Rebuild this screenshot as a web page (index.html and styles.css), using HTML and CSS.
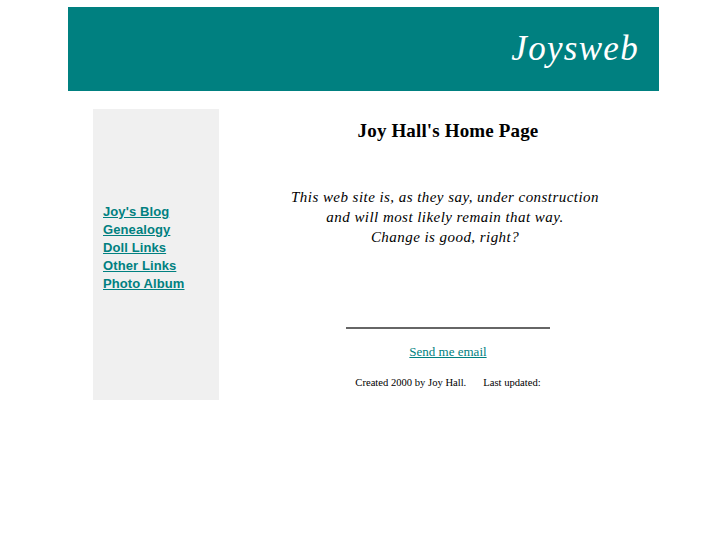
FILE: index.html
```html
<!DOCTYPE html>
<html>
<head>
<meta charset="utf-8">
<title>Joysweb</title>
<link rel="stylesheet" href="styles.css">
</head>
<body>
<div class="page">
  <header class="banner"><span class="brand">Joysweb</span></header>
  <div class="row">
    <nav class="sidebar">
      <a href="#">Joy's Blog</a>
      <a href="#">Genealogy</a>
      <a href="#">Doll Links</a>
      <a href="#">Other Links</a>
      <a href="#">Photo Album</a>
    </nav>
    <main class="content">
      <h1 class="title">Joy Hall's Home Page</h1>
      <p class="intro">This web site is, as they say, under construction<br>and will most likely remain that way.<br>Change is good, right?</p>
      <hr class="rule">
      <a class="mail" href="#">Send me email</a>
      <p class="footer">Created 2000 by Joy Hall.<span class="gap"></span>Last updated:</p>
    </main>
  </div>
</div>
</body>
</html>
```
FILE: styles.css
```css
html, body { margin: 0; padding: 0; background: #fff; }
body { font-family: "Liberation Serif", "Times New Roman", serif; color: #000; }
.page { width: 591px; margin: 7px auto 0; }
.banner {
  height: 84px;
  background: #008080;
  display: flex;
  align-items: center;
  justify-content: flex-end;
  padding-right: 20px;
}
.brand {
  color: #fff;
  font-style: italic;
  font-size: 35px;
  letter-spacing: 1.3px;
  margin-top: 0;
}
.row { display: flex; margin-top: 18px; }
.sidebar {
  margin-left: 25px;
  width: 126px;
  height: 291px;
  background: #f0f0f0;
  box-sizing: border-box;
  padding: 94px 0 0 10px;
  display: flex;
  flex-direction: column;
}
.sidebar a {
  font-family: "Liberation Sans", Arial, sans-serif;
  font-weight: bold;
  font-size: 13px;
  line-height: 18px;
  letter-spacing: 0.1px;
  color: #008080;
  text-decoration: underline;
}
.content {
  margin-left: 18px;
  width: 422px;
  text-align: center;
  display: flex;
  flex-direction: column;
  align-items: center;
}
.title {
  font-size: 19px;
  font-weight: bold;
  letter-spacing: 0.15px;
  margin: 10px 0 0;
  line-height: 24px;
}
.intro {
  font-style: italic;
  font-size: 15px;
  line-height: 20px;
  letter-spacing: 0.45px;
  margin: 44px 6px 0 0;
}
.rule {
  width: 204px;
  border: 0;
  border-top: 2px solid #666;
  margin: 80px 0 0;
}
.mail {
  font-size: 13px;
  color: #008080;
  margin-top: 15px;
}
.footer {
  font-size: 10.6px;
  margin: 17px 0 0;
}
.gap { display: inline-block; width: 17px; }
```
